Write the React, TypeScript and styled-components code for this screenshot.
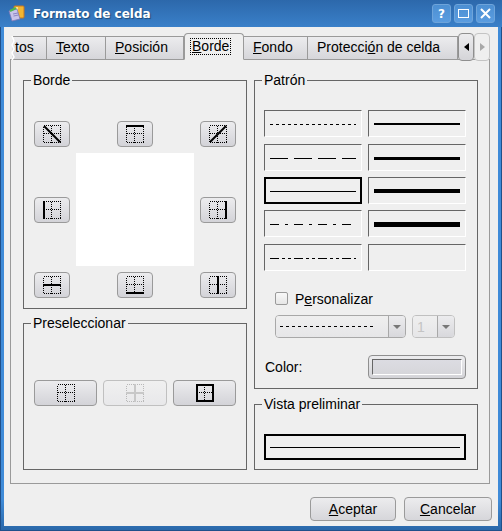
import React from 'react';
import styled, { createGlobalStyle } from 'styled-components';

const GlobalStyle = createGlobalStyle`
  html, body {
    margin: 0;
    padding: 0;
    background: #2a67a8;
  }
`;

const Window = styled.div`
  width: 502px;
  height: 531px;
  box-sizing: border-box;
  padding: 0 4px 5px;
  display: flex;
  flex-direction: column;
  overflow: hidden;
  background: linear-gradient(180deg, #2f6aad 0%, #3f8bd8 5%, #3f8bd8 94%, #2a67a8 100%);
  box-shadow: inset 1px 0 0 #20508a, inset -1px 0 0 #20508a, inset 0 -1px 0 #20508a;
  font-family: 'Liberation Sans', Arial, sans-serif;
  font-size: 14px;
  color: #000;
`;

const TitleBar = styled.div`
  height: 27px;
  flex: none;
  margin: 0 -4px;
  padding: 0 7px 0 8px;
  display: flex;
  align-items: center;
  background: linear-gradient(180deg, #2c68ab 0%, #3a80c9 100%);
`;

const TitleText = styled.span`
  flex: 1;
  margin-left: 8px;
  font-family: 'DejaVu Sans', Verdana, sans-serif;
  font-size: 12px;
  font-weight: 700;
  color: #fff;
  text-shadow: 1px 1px 1px #1d4a7c;
`;

const TitleButtons = styled.div`
  display: flex;
  gap: 3px;
`;

const TitleButton = styled.div`
  width: 19px;
  height: 19px;
  border: 1px solid #6ea4da;
  border-radius: 3px;
  box-sizing: border-box;
  background: linear-gradient(180deg, #4c8fd2, #5b9de0);
  display: flex;
  align-items: center;
  justify-content: center;
  color: #fff;
  font-family: 'DejaVu Sans', sans-serif;
  font-size: 12px;
  font-weight: 700;
`;

const Body = styled.div`
  flex: 1;
  background: #efefef;
  padding: 6px 6px 0;
  display: flex;
  flex-direction: column;
`;

const TabBar = styled.div`
  height: 26px;
  flex: none;
  position: relative;
  z-index: 1;
  padding-left: 2px;
  display: flex;
  align-items: flex-start;
`;

const Tab = styled.div<{ $w: number; $active?: boolean }>`
  width: ${p => p.$w}px;
  flex: none;
  box-sizing: border-box;
  height: ${p => (p.$active ? 27 : 24)}px;
  margin-top: ${p => (p.$active ? 0 : 3)}px;
  padding-left: ${p => (p.$active ? 6 : 9)}px;
  padding-bottom: ${p => (p.$active ? 0 : 2)}px;
  display: flex;
  align-items: center;
  border: 1px solid #9a9a9a;
  border-left-width: ${p => (p.$active ? 1 : 0)}px;
  border-bottom-color: ${p => (p.$active ? '#efefef' : '#9a9a9a')};
  border-radius: ${p => (p.$active ? '4px 4px 0 0' : '0')};
  background: ${p => (p.$active ? '#efefef' : 'linear-gradient(180deg, #ececee 0%, #d6d6da 100%)')};
`;

const FirstTab = styled(Tab)`
  position: relative;
  padding-left: 3px;
`;

const TabTear = styled.svg`
  position: absolute;
  left: -1px;
  top: -1px;
`;

const FocusLabel = styled.span`
  outline: 1px dotted #000;
  padding: 0 1px;
  line-height: 15px;
`;

const ScrollButton = styled.div<{ $disabled?: boolean }>`
  width: 16px;
  height: 28px;
  flex: none;
  box-sizing: border-box;
  border: 1px solid ${p => (p.$disabled ? '#c4c4c4' : '#8f8f8f')};
  border-radius: 4px;
  background: ${p => (p.$disabled ? '#efefef' : 'linear-gradient(180deg, #ececee, #d4d4d8)')};
  display: flex;
  align-items: center;
  justify-content: center;
`;

const Pane = styled.div`
  width: 480px;
  height: 425px;
  flex: none;
  box-sizing: border-box;
  border: 1px solid #9a9a9a;
  padding: 12px 0 0 12px;
  display: grid;
  grid-template-columns: 224px 224px;
  column-gap: 7px;
  align-content: start;
`;

const Column = styled.div`
  display: flex;
  flex-direction: column;
`;

const Group = styled.fieldset<{ $h: number; $top: number; $mt?: number; $left?: number; $right?: number }>`
  margin: ${p => p.$mt ?? 0}px 0 0;
  min-width: 0;
  box-sizing: border-box;
  height: ${p => p.$h}px;
  border: 1px solid #666;
  padding: ${p => p.$top}px ${p => p.$right ?? 9}px 0 ${p => p.$left ?? 10}px;
`;

const Legend = styled.legend<{ $ml: number }>`
  padding: 0 2px;
  margin-left: ${p => p.$ml}px;
  line-height: 16px;
`;

const BorderGrid = styled.div`
  display: grid;
  grid-template-columns: 36px 118px 36px;
  grid-template-rows: 26px 113px 26px;
  gap: 6px;
  align-items: center;
  justify-items: center;
`;

const Canvas = styled.div`
  grid-column: 2;
  grid-row: 2;
  width: 118px;
  height: 113px;
  background: #fff;
`;

const IconButton = styled.button<{ $col: number; $row: number }>`
  grid-column: ${p => p.$col};
  grid-row: ${p => p.$row};
  width: 36px;
  height: 26px;
  padding: 0;
  border: 1px solid #9a9a9a;
  border-radius: 4px;
  background: linear-gradient(180deg, #ececee 0%, #d3d3d8 100%);
  display: flex;
  align-items: center;
  justify-content: center;
`;

const PresetRow = styled.div`
  display: grid;
  grid-template-columns: 63px 64px 63px;
  gap: 6px;
`;

const PresetButton = styled.button<{ $disabled?: boolean }>`
  height: 26px;
  padding: 0;
  border: 1px solid ${p => (p.$disabled ? '#c0c0c0' : '#9a9a9a')};
  border-radius: 4px;
  background: ${p => (p.$disabled ? 'linear-gradient(180deg, #f0f0f0, #e8e8ea)' : 'linear-gradient(180deg, #ececee 0%, #d3d3d8 100%)')};
  display: flex;
  align-items: center;
  justify-content: center;
`;

const LineGrid = styled.div`
  display: grid;
  grid-template-columns: 98px 98px;
  grid-template-rows: 34px 33px 33px 34px 27px;
  column-gap: 6px;
  align-items: start;
`;

const LineCell = styled.div<{ $selected?: boolean }>`
  height: 27px;
  box-sizing: border-box;
  display: flex;
  align-items: center;
  padding-left: ${p => (p.$selected ? 4 : 5)}px;
  border-style: solid;
  border-width: ${p => (p.$selected ? '2px' : '1px')};
  border-color: ${p => (p.$selected ? '#000' : '#666 #fff #fff #666')};
`;

const CustomRow = styled.label`
  margin: 21px 0 0 11px;
  height: 13px;
  display: flex;
  align-items: center;
  gap: 7px;
`;

const CheckBox = styled.span`
  width: 13px;
  height: 13px;
  box-sizing: border-box;
  border: 1px solid #9a9a9a;
  border-radius: 2px;
  background: linear-gradient(180deg, #f8f8f8, #e6e6e6);
`;

const ComboRow = styled.div`
  margin: 10px 0 0 11px;
  display: flex;
  gap: 6px;
`;

const Combo = styled.div<{ $w: number; $faded?: boolean }>`
  width: ${p => p.$w}px;
  height: 23px;
  box-sizing: border-box;
  border: 1px solid ${p => (p.$faded ? '#c0c0c0' : '#a8a8a8')};
  border-radius: 4px;
  background: #efefef;
  display: flex;
  align-items: center;
  overflow: hidden;
`;

const ComboValue = styled.div`
  flex: 1;
  height: 100%;
  box-sizing: border-box;
  padding-left: 4px;
  display: flex;
  align-items: center;
  color: #c4c4c4;
  background: linear-gradient(180deg, #efefef, #e6e6e8);
`;

const ComboArrow = styled.div`
  width: 16px;
  height: 100%;
  flex: none;
  border-left: 1px solid #a8a8a8;
  display: flex;
  align-items: center;
  justify-content: center;
  background: linear-gradient(180deg, #ececee, #d8d8dc);
`;

const ArrowDown = styled.span`
  width: 0;
  height: 0;
  border-left: 4px solid transparent;
  border-right: 4px solid transparent;
  border-top: 4px solid #777;
`;

const ColorRow = styled.div`
  margin-top: 17px;
  display: flex;
  align-items: center;
  justify-content: space-between;
`;

const ColorLabel = styled.span`
  margin-left: 1px;
`;

const ColorButton = styled.button`
  width: 98px;
  height: 24px;
  padding: 3px;
  box-sizing: border-box;
  border: 1px solid #8f8f8f;
  border-radius: 4px;
  background: linear-gradient(180deg, #ececee, #d4d4d8);
  display: flex;
`;

const ColorSwatch = styled.span`
  flex: 1;
  border: 1px solid;
  border-color: #666 #fff #fff #666;
  background: linear-gradient(180deg, #dcdce2, #d6d6da);
`;

const PreviewBox = styled.div`
  height: 26px;
  box-sizing: border-box;
  border: 2px solid #000;
  padding: 0 4px;
  display: flex;
  align-items: center;
`;

const PreviewLine = styled.div`
  flex: 1;
  height: 1px;
  background: #000;
`;

const Footer = styled.div`
  margin-top: 13px;
  display: flex;
  justify-content: flex-end;
  gap: 8px;
`;

const DialogButton = styled.button<{ $w: number }>`
  width: ${p => p.$w}px;
  height: 24px;
  padding: 0;
  border: 1px solid #9a9a9a;
  border-radius: 4px;
  background: linear-gradient(180deg, #ececee 0%, #d6d6da 100%);
  font: inherit;
  color: #000;
`;

// thick strokes on the small dotted cell preview
type Bar = 'diagDown' | 'top' | 'diagUp' | 'left' | 'right' | 'midH' | 'bottom' | 'midV' | 'none' | 'box' | 'plus';

const barPaths: Record<Bar, React.ReactNode> = {
  diagDown: <path d="M1 1 L17 17" stroke="#000" strokeWidth="2" shapeRendering="auto" />,
  diagUp: <path d="M1 17 L17 1" stroke="#000" strokeWidth="2" shapeRendering="auto" />,
  top: <rect x="0" y="0" width="18" height="2" fill="#000" />,
  bottom: <rect x="0" y="16" width="18" height="2" fill="#000" />,
  left: <rect x="0" y="0" width="2" height="18" fill="#000" />,
  right: <rect x="16" y="0" width="2" height="18" fill="#000" />,
  midH: <rect x="0" y="8" width="18" height="2" fill="#000" />,
  midV: <rect x="8" y="0" width="2" height="18" fill="#000" />,
  box: <path d="M1 1 H17 V17 H1 Z" fill="none" stroke="#000" strokeWidth="2" />,
  plus: <path d="M0 9 H18 M9 0 V18" stroke="#c8c8c8" strokeWidth="2" />,
  none: null,
};

const CellIcon = ({ bar, faded }: { bar: Bar; faded?: boolean }) => (
  <svg width="18" height="18" viewBox="0 0 18 18" shapeRendering="crispEdges">
    <path
      d="M0.5 0.5 H17.5 V17.5 H0.5 Z M0.5 8.5 H17.5 M8.5 0.5 V17.5"
      fill="none"
      stroke={faded ? '#b8b8b8' : '#000'}
      strokeDasharray="1 1"
    />
    {barPaths[bar]}
  </svg>
);

const LinePreview = ({ width, dash }: { width: number; dash?: string }) => (
  <svg width="86" height="8" viewBox="0 0 86 8" shapeRendering="crispEdges">
    <line x1="0" y1="4" x2="86" y2="4" stroke="#000" strokeWidth={width} strokeDasharray={dash} />
  </svg>
);

const AppIcon = () => (
  <svg width="17" height="17" viewBox="0 0 17 17">
    <rect x="6" y="1" width="10" height="12" rx="1" fill="#f2b632" stroke="#c9771f" />
    <rect x="7" y="2" width="3" height="10" fill="#fbe08a" />
    <path d="M1 6 L9 4 L12 14 L4 16 Z" fill="#c9c4ea" stroke="#7d77b5" strokeWidth="0.8" />
    <path d="M2 6 L8 3" stroke="#4fb84f" strokeWidth="2" />
    <path d="M5 9 L10 8 M5.5 11 L10.5 10" stroke="#8b85c4" />
  </svg>
);

const Triangle = ({ left, color }: { left?: boolean; color: string }) => (
  <svg width="5" height="8" viewBox="0 0 5 8">
    <path d={left ? 'M5 0 L0 4 L5 8 Z' : 'M0 0 L5 4 L0 8 Z'} fill={color} />
  </svg>
);

const lines: Array<{ width: number; dash?: string; selected?: boolean }> = [
  { width: 1, dash: '3 3' },
  { width: 2 },
  { width: 1, dash: '18 6' },
  { width: 3 },
  { width: 1, selected: true },
  { width: 4 },
  { width: 1, dash: '9 6 3 6' },
  { width: 5 },
  { width: 1, dash: '9 3 3 3 3 3' },
  { width: 0 },
];

const borderButtons: Array<{ bar: Bar; col: number; row: number }> = [
  { bar: 'diagDown', col: 1, row: 1 },
  { bar: 'top', col: 2, row: 1 },
  { bar: 'diagUp', col: 3, row: 1 },
  { bar: 'left', col: 1, row: 2 },
  { bar: 'right', col: 3, row: 2 },
  { bar: 'midH', col: 1, row: 3 },
  { bar: 'bottom', col: 2, row: 3 },
  { bar: 'midV', col: 3, row: 3 },
];

const App: React.FC = () => (
  <Window>
    <GlobalStyle />
    <TitleBar>
      <AppIcon />
      <TitleText>Formato de celda</TitleText>
      <TitleButtons>
        <TitleButton>?</TitleButton>
        <TitleButton>
          <svg width="11" height="11" viewBox="0 0 11 11">
            <rect x="0.5" y="1.5" width="10" height="8" fill="none" stroke="#fff" />
          </svg>
        </TitleButton>
        <TitleButton>
          <svg width="11" height="11" viewBox="0 0 11 11">
            <path d="M1 1 L10 10 M10 1 L1 10" stroke="#fff" strokeWidth="2" />
          </svg>
        </TitleButton>
      </TitleButtons>
    </TitleBar>
    <Body>
      <TabBar>
        <FirstTab $w={35}>
          <TabTear width="4" height="24" viewBox="0 0 4 24">
            <path d="M1 0 L3 5 L1 9 L3 13 L1 17 L3 21 L1 24" fill="none" stroke="#fff" strokeWidth="1.5" />
          </TabTear>
          tos
        </FirstTab>
        <Tab $w={59}><span><u>T</u>exto</span></Tab>
        <Tab $w={78}><span><u>P</u>osición</span></Tab>
        <Tab $w={60} $active><FocusLabel><u>B</u>orde</FocusLabel></Tab>
        <Tab $w={64}><span><u>F</u>ondo</span></Tab>
        <Tab $w={150}><span>Protecci<u>ó</u>n de celda</span></Tab>
        <ScrollButton><Triangle left color="#000" /></ScrollButton>
        <ScrollButton $disabled><Triangle color="#a8a8a8" /></ScrollButton>
      </TabBar>
      <Pane>
        <Column>
          <Group $h={237} $top={33}>
            <Legend $ml={-3}>Borde</Legend>
            <BorderGrid>
              {borderButtons.map(b => (
                <IconButton key={b.bar} $col={b.col} $row={b.row}>
                  <CellIcon bar={b.bar} />
                </IconButton>
              ))}
              <Canvas />
            </BorderGrid>
          </Group>
          <Group $h={155} $top={49} $mt={6}>
            <Legend $ml={-3}>Preseleccionar</Legend>
            <PresetRow>
              <PresetButton><CellIcon bar="none" /></PresetButton>
              <PresetButton $disabled><CellIcon bar="plus" faded /></PresetButton>
              <PresetButton><CellIcon bar="box" /></PresetButton>
            </PresetRow>
          </Group>
        </Column>
        <Column>
          <Group $h={317} $top={22} $left={9} $right={11}>
            <Legend $ml={-2}>Patrón</Legend>
            <LineGrid>
              {lines.map((l, i) => (
                <LineCell key={i} $selected={l.selected}>
                  {l.width > 0 && <LinePreview width={l.width} dash={l.dash} />}
                </LineCell>
              ))}
            </LineGrid>
            <CustomRow>
              <CheckBox />
              <span>P<u>e</u>rsonalizar</span>
            </CustomRow>
            <ComboRow>
              <Combo $w={131}>
                <ComboValue>
                  <svg width="96" height="3" viewBox="0 0 96 3" shapeRendering="crispEdges">
                    <line x1="0" y1="1.5" x2="96" y2="1.5" stroke="#000" strokeDasharray="3 3" />
                  </svg>
                </ComboValue>
                <ComboArrow><ArrowDown /></ComboArrow>
              </Combo>
              <Combo $w={43} $faded>
                <ComboValue>1</ComboValue>
                <ComboArrow><ArrowDown /></ComboArrow>
              </Combo>
            </ComboRow>
            <ColorRow>
              <ColorLabel>Color:</ColorLabel>
              <ColorButton><ColorSwatch /></ColorButton>
            </ColorRow>
          </Group>
          <Group $h={74} $top={22} $mt={7} $left={9} $right={11}>
            <Legend $ml={-2}>Vista preliminar</Legend>
            <PreviewBox><PreviewLine /></PreviewBox>
          </Group>
        </Column>
      </Pane>
      <Footer>
        <DialogButton $w={86}><u>A</u>ceptar</DialogButton>
        <DialogButton $w={88}><u>C</u>ancelar</DialogButton>
      </Footer>
    </Body>
  </Window>
);

export default App;
